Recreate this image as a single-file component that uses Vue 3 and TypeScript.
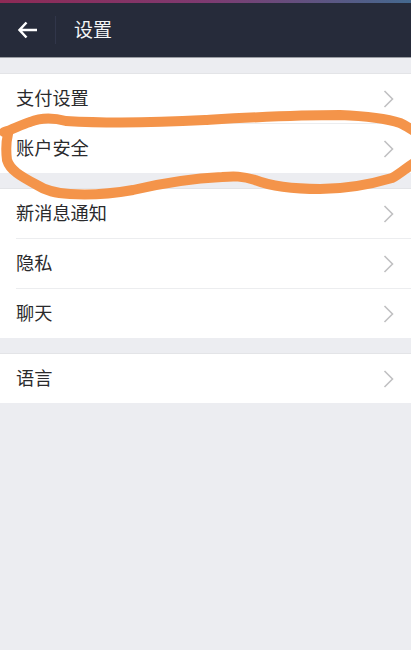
<script setup lang="ts">
const groups: string[][] = [
  ['支付设置', '账户安全'],
  ['新消息通知', '隐私', '聊天'],
  ['语言'],
]
</script>

<template>
  <div class="page">
    <div class="strip"></div>
    <header class="bar">
      <button class="back" aria-label="返回">
        <svg width="22" height="20" viewBox="0 0 22 20">
          <path d="M9.5 2.5 L2.5 10 L9.5 17.5 M3 10 H20" fill="none" stroke="#fff" stroke-width="2.5" />
        </svg>
      </button>
      <span class="divider"></span>
      <h1 class="title">设置</h1>
    </header>
    <main class="list">
      <section v-for="(group, g) in groups" :key="g" class="group">
        <div v-for="item in group" :key="item" class="row">
          <span class="label">{{ item }}</span>
          <svg class="chev" width="11" height="18" viewBox="0 0 11 18">
            <path d="M1.5 1 L9.5 9 L1.5 17" fill="none" stroke="#c0c0c2" stroke-width="1.6" />
          </svg>
        </div>
      </section>
    </main>
    <svg class="scribble" width="411" height="650" viewBox="0 0 411 650">
      <path
        d="M4 132 C12 130 20 125 30 122 C42 117 55 118 66 121 C100 123 150 123 205 120 C240 118 290 115 340 115 C365 116 385 118 400 123 C405 125 409 128 414 131"
        fill="none" stroke="#f4944a" stroke-width="10" stroke-linecap="round"
      />
      <path
        d="M8 134 C6 142 6 152 7 160 C10 170 20 176 37 185 C46 191 55 193 70 194 C85 195 110 194 133 190 C150 186 180 179 222 177 C234 176 242 176 255 180 C270 186 290 189 320 189 C345 189 365 186 392 178 C400 174 406 168 414 163"
        fill="none" stroke="#f4944a" stroke-width="10" stroke-linecap="round"
      />
    </svg>
  </div>
</template>

<style scoped>
.page {
  position: relative;
  width: 411px;
  height: 650px;
  overflow: hidden;
  background: #ecedf1;
  font-family: "Noto Sans CJK SC", "Noto Sans", sans-serif;
}
.strip {
  height: 3px;
  background: linear-gradient(90deg, #8d2a55 0%, #7e3a70 50%, #44698f 100%);
}
.bar {
  display: flex;
  align-items: center;
  height: 54px;
  background: #262b3a;
  border-bottom: 1px solid #9a9da3;
}
.back {
  display: flex;
  align-items: center;
  justify-content: center;
  width: 55px;
  height: 100%;
  padding: 0;
  border: 0;
  background: none;
}
.divider {
  width: 1px;
  height: 28px;
  background: #31364a;
}
.title {
  margin: 0 0 3px 18px;
  font-size: 19px;
  font-weight: 400;
  color: #f4f5f6;
}
.list {
  padding-top: 15px;
}
.group {
  margin-bottom: 15px;
  background: #fff;
  border-top: 1px solid #e3e4e7;
}
.row {
  display: flex;
  align-items: center;
  justify-content: space-between;
  height: 49px;
  margin-left: 16px;
  padding-right: 17px;
  border-bottom: 1px solid #ecedef;
}
.group .row:last-child {
  border-bottom: 0;
}
.label {
  margin-bottom: 3px;
  font-size: 18.2px;
  color: #2a2a2c;
}
.scribble {
  position: absolute;
  top: 0;
  left: 0;
  pointer-events: none;
}
</style>
